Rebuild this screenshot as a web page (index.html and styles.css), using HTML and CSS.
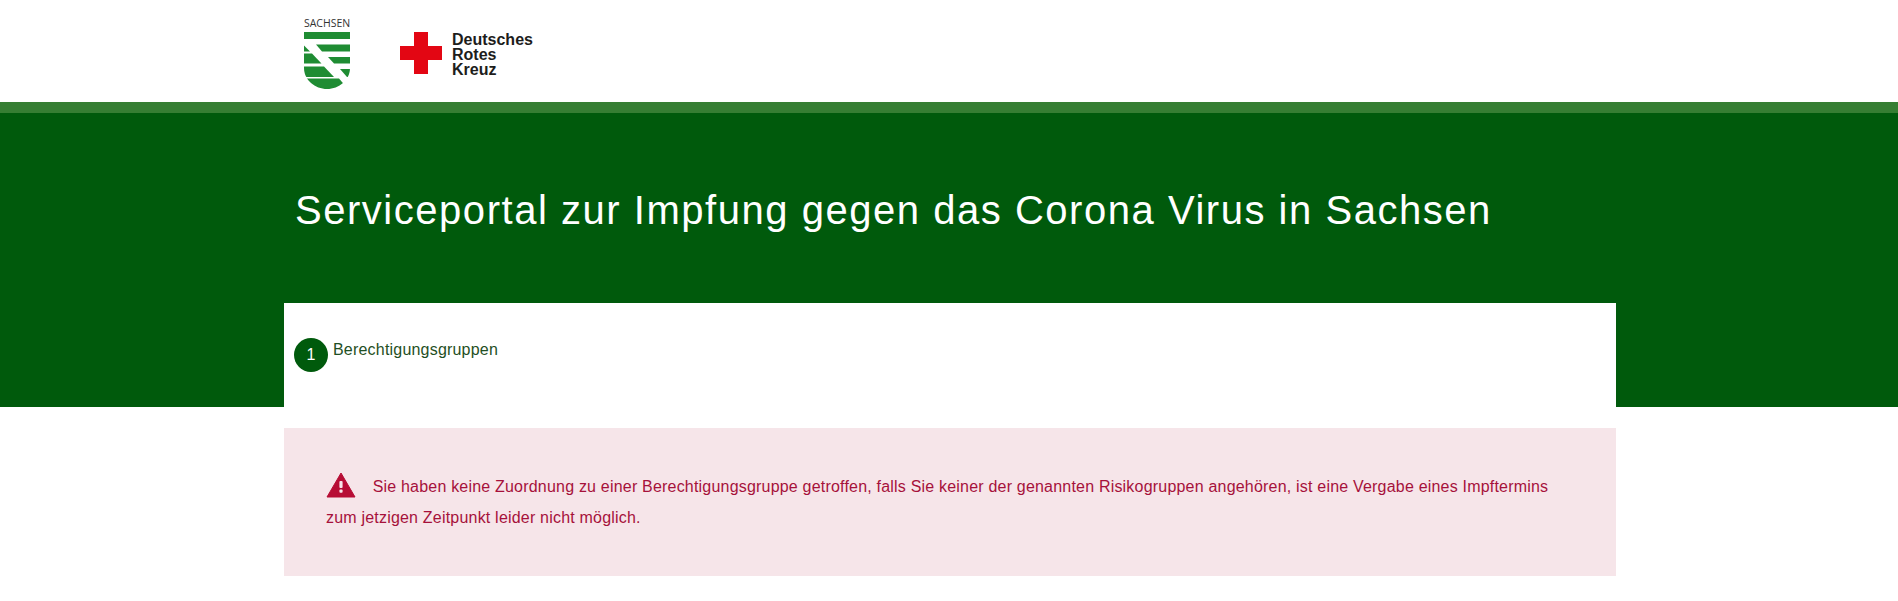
FILE: index.html
```html
<!DOCTYPE html>
<html lang="de">
<head>
    <meta charset="UTF-8">
    <meta name="viewport" content="width=device-width, initial-scale=1.0">
    <title>Serviceportal Impfung Sachsen</title>
    <link rel="stylesheet" href="styles.css">
</head>
<body>
    <!-- Logos -->
    <header class="logo-bar">
        <div class="container logos">
            <div class="logo-sachsen">
                <span class="sachsen-name">SACHSEN</span>
                <svg class="sachsen-shield" width="46" height="57" viewBox="0 0 46 57">
                    <defs>
                        <clipPath id="shield-shape">
                            <path d="M0 0H46V36C46 48 35 57 23 57C11 57 0 48 0 36Z"/>
                        </clipPath>
                    </defs>
                    <g clip-path="url(#shield-shape)" fill="#1f8c33">
                        <path d="M0 0H46V7H0Z"/>
                        <path d="M12 12.5H46V19.5H18Z"/>
                        <path d="M0 13.5L6 19.5H0Z"/>
                        <path d="M24 25H46V31.5H30Z"/>
                        <path d="M0 21.5H8L17.5 31.5H0Z"/>
                        <path d="M36 37H46V45H43Z"/>
                        <path d="M0 34.5H20L30 45H0Z"/>
                        <path d="M2 46.5H35L44 57H2Z"/>
                    </g>
                </svg>
            </div>
            <div class="logo-drk">
                <svg class="drk-cross" width="42" height="42" viewBox="0 0 42 42">
                    <path d="M14 0H28V14H42V28H28V42H14V28H0V14H14Z" fill="#e30613"/>
                </svg>
                <div class="drk-name">Deutsches<br>Rotes<br>Kreuz</div>
            </div>
        </div>
    </header>

    <!-- Hero -->
    <section class="hero">
        <div class="container">
            <h1>Serviceportal zur Impfung gegen das Corona Virus in Sachsen</h1>
            <div class="steps">
                <span class="step-number">1</span>
                <span class="step-label">Berechtigungsgruppen</span>
            </div>
        </div>
    </section>

    <!-- Main Content -->
    <main class="container">
        <div class="alert">
            <svg class="alert-icon" width="30" height="26" viewBox="0 0 30 26">
                <path d="M15 1L29 25H1Z" fill="#b70d35" stroke="#b70d35" stroke-width="1" stroke-linejoin="round"/>
                <rect x="13.4" y="9" width="3.2" height="7" rx="1" fill="#f6e5e9"/>
                <rect x="13.4" y="17.6" width="3.2" height="3.2" rx="1" fill="#f6e5e9"/>
            </svg>
            Sie haben keine Zuordnung zu einer Berechtigungsgruppe getroffen, falls Sie keiner der genannten Risikogruppen angehören, ist eine Vergabe eines Impftermins zum jetzigen Zeitpunkt leider nicht möglich.
        </div>
    </main>
</body>
</html>
```

FILE: styles.css
```css
/* Global Styles */
body {
    font-family: "Liberation Sans", Arial, sans-serif;
    margin: 0;
    padding: 0;
    background-color: #fff;
}

.container {
    width: 1332px;
    margin: 0 282px 0 284px;
}

/* Logos */
.logo-bar {
    height: 102px;
    background: #fff;
}
.logos {
    display: flex;
    align-items: flex-start;
}
.logo-sachsen {
    display: flex;
    flex-direction: column;
    align-items: center;
    width: 46px;
    margin: 17px 0 0 20px;
}
.sachsen-name {
    font-family: "Open Sans", sans-serif;
    font-size: 10.5px;
    line-height: 12px;
    color: #333;
    white-space: nowrap;
}
.sachsen-shield {
    display: block;
    margin-top: 3px;
}
.logo-drk {
    display: flex;
    margin: 32px 0 0 50px;
}
.drk-cross {
    display: block;
}
.drk-name {
    margin: 0 0 0 10px;
    font-size: 16px;
    line-height: 15px;
    font-weight: bold;
    color: #1d1d1b;
}

/* Hero */
.hero {
    height: 294px;
    background: #005a0c;
    border-top: 11px solid #367e33;
}
.hero h1 {
    height: 190px;
    margin: 0;
    padding: 74px 0 0 11px;
    box-sizing: border-box;
    font-size: 40px;
    line-height: 46px;
    font-weight: normal;
    letter-spacing: 1.53px;
    color: #fff;
    white-space: nowrap;
}
.steps {
    display: flex;
    align-items: flex-start;
    height: 104px;
    padding: 35px 0 0 10px;
    box-sizing: border-box;
    background: #fff;
}
.step-number {
    width: 34px;
    height: 34px;
    border-radius: 50%;
    background: #005a0c;
    color: #fff;
    font-size: 16px;
    line-height: 34px;
    text-align: center;
}
.step-label {
    margin: 2px 0 0 5px;
    font-size: 16px;
    line-height: 20px;
    letter-spacing: 0.2px;
    color: #1f4f24;
}

/* Alert */
.alert {
    height: 148px;
    margin-top: 21px;
    padding: 43px 42px 0;
    box-sizing: border-box;
    background: #f6e5e9;
    color: #a6113b;
    font-size: 16px;
    line-height: 31px;
    letter-spacing: 0.2px;
}
.alert-icon {
    margin-right: 12px;
    vertical-align: -6px;
}
```
